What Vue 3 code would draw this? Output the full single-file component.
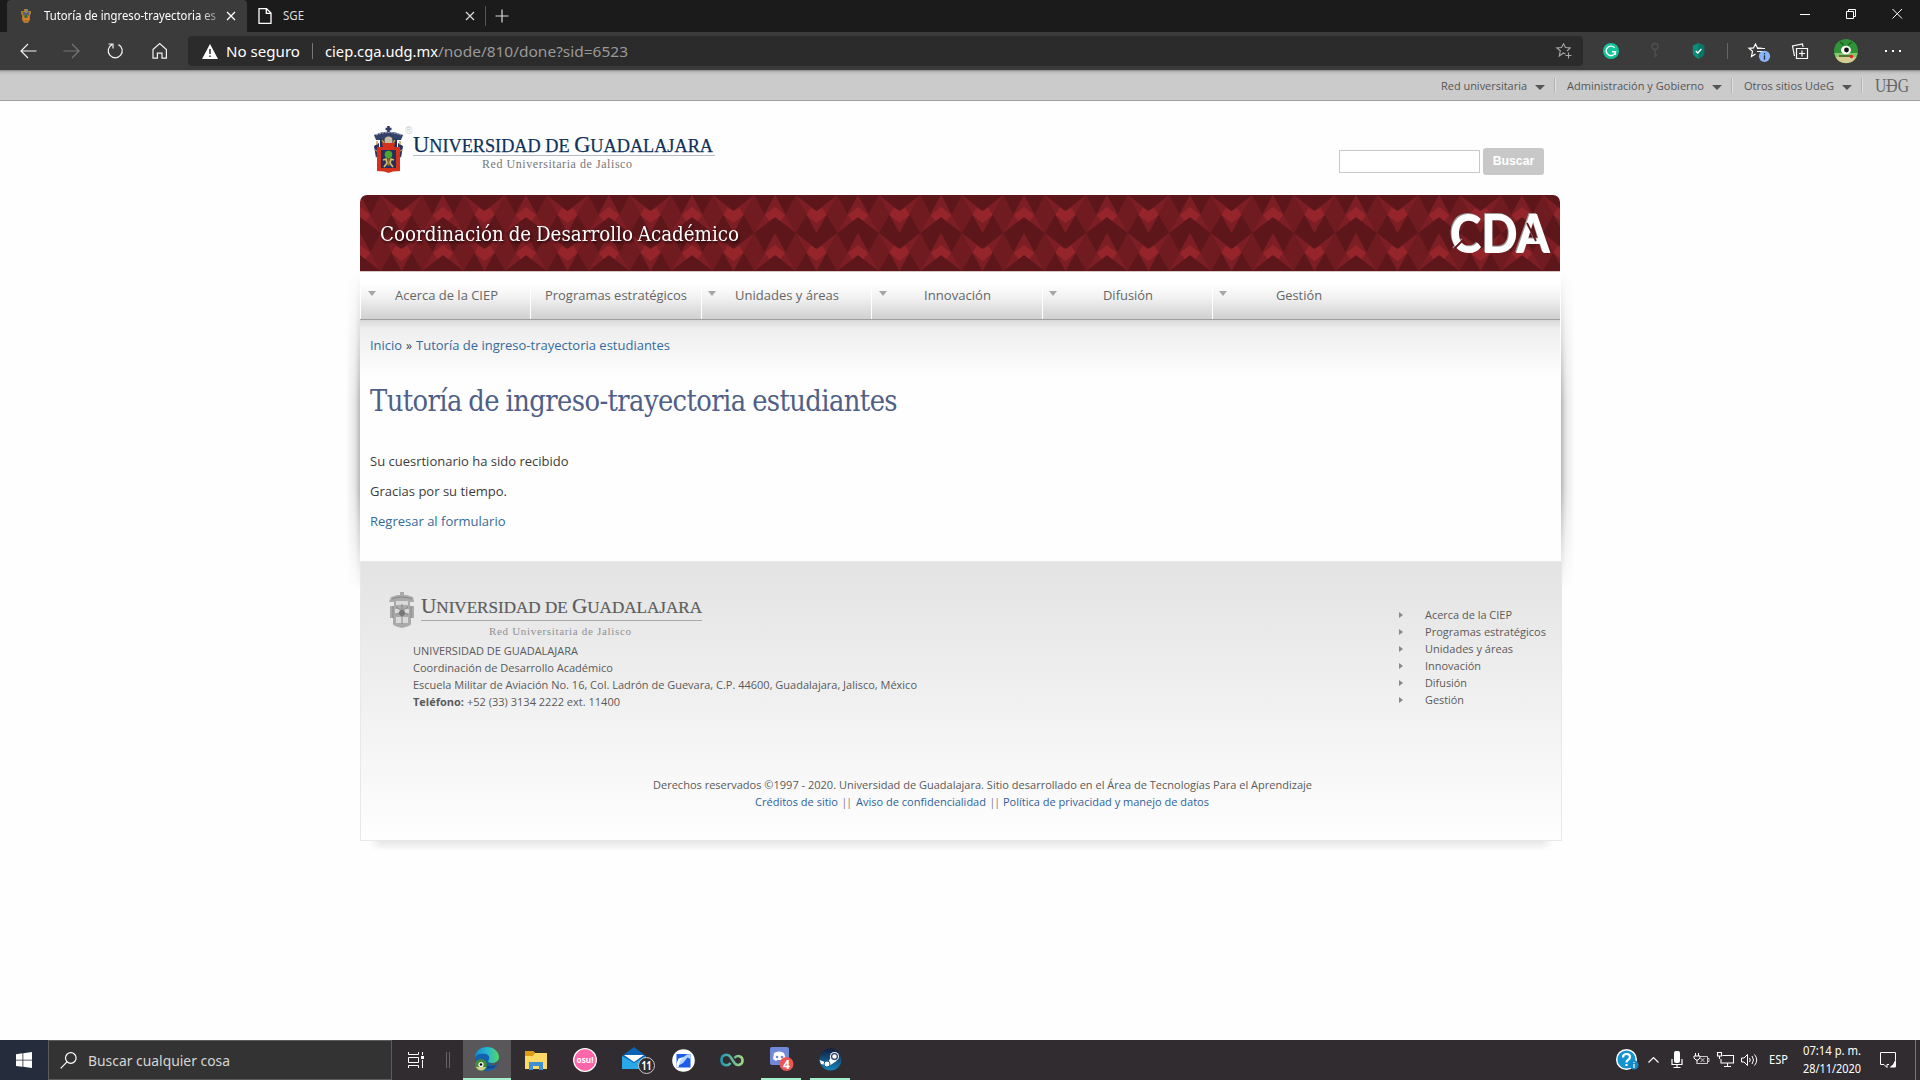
<script setup>
import { h } from 'vue'

// Single line of text fitted to a given width
const FitText = (props) =>
  h('svg', { width: props.w, height: props.lh, style: 'display:block;flex:none;overflow:visible' }, [
    h('text', {
      x: 0,
      y: props.base,
      'font-size': props.size,
      fill: 'currentColor',
      textLength: props.w,
      lengthAdjust: 'spacingAndGlyphs',
    }, props.text),
  ])
FitText.props = ['text', 'w', 'size', 'lh', 'base']

const siteMenus = [
  { label: 'Red universitaria', w: 86 },
  { label: 'Administración y Gobierno', w: 137 },
  { label: 'Otros sitios UdeG', w: 90 },
]
const nav = [
  { label: 'Acerca de la CIEP', w: 103, sub: true },
  { label: 'Programas estratégicos', w: 142, sub: false },
  { label: 'Unidades y áreas', w: 104, sub: true },
  { label: 'Innovación', w: 67, sub: true },
  { label: 'Difusión', w: 50, sub: true },
  { label: 'Gestión', w: 46, sub: true },
]
const address = [
  ['UNIVERSIDAD DE GUADALAJARA', 165],
  ['Coordinación de Desarrollo Académico', 200],
  ['Escuela Militar de Aviación No. 16, Col. Ladrón de Guevara, C.P. 44600, Guadalajara, Jalisco, México', 504],
]
const footNav = [
  ['Acerca de la CIEP', 87],
  ['Programas estratégicos', 121],
  ['Unidades y áreas', 88],
  ['Innovación', 56],
  ['Difusión', 42],
  ['Gestión', 39],
]
</script>

<template>
  <div class="screen">
    <div class="tabs">
      <div class="tab active">
        <svg class="fav" width="12" height="16" viewBox="0 0 12 16">
          <path d="M4 1h4v2h3v3l-1 1v5l-2 3H4l-2-3V7L1 6V3h3z" fill="#a9792d" />
          <path d="M3 4h6v3H3z" fill="#59617a" /><path d="M3 8h6v4H3z" fill="#e07b20" />
          <circle cx="6" cy="8.500" r="1.700" fill="#2c6b45" /><path d="M5 1h2v4H5z" fill="#8d8a70" />
        </svg>
        <div class="tabname"><FitText text="Tutoría de ingreso-trayectoria es" :w="172" :size="12" :lh="32" :base="20" /></div>
        <svg class="tabx" width="10" height="10" viewBox="0 0 10 10"><path d="M1 1l8 8M9 1l-8 8" stroke="#fff" stroke-width="1.300" /></svg>
      </div>
      <div class="tab second">
        <svg width="14" height="16" viewBox="0 0 14 16"><path d="M1 .7h7.500L13 5v10.300H1zM8.300.7V5.300H13" fill="none" stroke="#fff" stroke-width="1.300" /></svg>
        <div class="sge"><FitText text="SGE" :w="21" :size="12" :lh="32" :base="20" /></div>
        <svg width="10" height="10" viewBox="0 0 10 10"><path d="M1 1l8 8M9 1l-8 8" stroke="#ddd" stroke-width="1.200" /></svg>
      </div>
      <i class="tabsep"></i>
      <svg class="plus" width="14" height="14" viewBox="0 0 14 14"><path d="M7 .5v13M.5 7h13" stroke="#ddd" stroke-width="1.200" /></svg>
      <svg class="win" width="104" height="12" viewBox="0 0 104 12" fill="none" stroke="#fff">
        <path d="M0 6.500h10" /><path d="M46.500 3.500h7v7h-7zM48.500 3.500v-2h7v7h-2M92.500 1l9.500 9.500M102 1l-9.500 9.500" />
      </svg>
    </div>

    <div class="tools">
      <svg class="navicons" width="148" height="18" viewBox="0 0 148 18" fill="none" stroke="#f2f2f2" stroke-width="1.200">
        <path d="M8 2L1 9l7 7M1 9h15.500" />
        <path d="M52 2l7 7-7 7M59 9H43.500" stroke="#777" />
        <path d="M98.500 2.600a7 7 0 1 1-6.500 0M93 6.500V2h-4.500" />
        <path d="M133 7.500l6.700-6 6.700 6v8.700h-4.400v-5h-4.600v5H133z" />
      </svg>
      <div class="addr">
        <svg class="warn" width="16" height="15" viewBox="0 0 16 15"><path d="M8 0l8 15H0z" fill="#fff" /><path d="M8 5v5M8 11.500v1.500" stroke="#2b2b2b" stroke-width="1.500" /></svg>
        <FitText text="No seguro" :w="74" :size="15" :lh="30" :base="21" />
        <i class="addrsep"></i>
        <div class="host"><FitText text="ciep.cga.udg.mx" :w="113" :size="15" :lh="30" :base="21" /></div>
        <div class="path"><FitText text="/node/810/done?sid=6523" :w="190" :size="15" :lh="30" :base="21" /></div>
        <svg class="fstar" width="16" height="16" viewBox="0 0 16 16" fill="none" stroke="#aaa" stroke-width="1.100">
          <path d="M9.500 11L7.500 10 3.300 13l1-5.200L.8 4.900l4.700-.4L7.500.8l2 3.700 4.700.4L11 8M12.500 9.500v6M9.500 12.500h6" />
        </svg>
      </div>
      <svg class="ext" width="316" height="26" viewBox="0 0 316 26">
        <circle cx="18" cy="13" r="8" fill="#15c39a" />
        <path d="M21.500 9.800a4.700 4.700 0 1 0 1 4h-3.500M22.300 14v3" fill="none" stroke="#fff" stroke-width="1.400" />
        <g stroke="#505050" fill="none" stroke-width="1.300"><circle cx="62" cy="8.500" r="3" /><path d="M62 11.500v8M62 17h2" /></g>
        <path d="M105.500 5l5.700 2.500v8c-1 2.500-3 4-5.700 5.500-2.700-1.500-4.700-3-5.700-5.500v-8z" fill="#0b8d78" />
        <path d="M105.500 5l5.700 2.500v8c-1 2.500-3 4-5.700 5.500z" fill="#087666" />
        <path d="M102.800 13l2 2 3.600-4" fill="none" stroke="#fff" stroke-width="1.300" />
        <path d="M134.500 5v16" stroke="#666" />
        <g fill="none" stroke="#fff" stroke-width="1.200">
          <path d="M168 10.300l-4.500-.4L161.500 6l-2 3.900-4.500.4 3.500 3-1 5.200 4-2.500M163 13.500h6M163 10.500h8" transform="translate(1 0)" />
          <path d="M205.500 10.500h9v10h-11v-10zM209 12.500v6M206 15.500h6M201.500 18l-2-10 10-2 .5 3" />
        </g>
        <circle cx="171.500" cy="18.300" r="5.600" fill="#8ab4f8" /><path d="M171.500 15v1.300M171.500 17.300v4.500" stroke="#25324a" stroke-width="1.300" />
        <circle cx="253" cy="13" r="12" fill="#2f9438" />
        <path d="M241.200 15a12 12 0 0 0 23.600 0z" fill="#8cc46a" /><path d="M242.500 19a12 12 0 0 0 21 0z" fill="#d5cc91" />
        <path d="M247 4l4 3M259 4l-4 3" stroke="#185c22" stroke-width="1.200" />
        <ellipse cx="253" cy="12" rx="5" ry="4.300" fill="#fff" /><circle cx="253.500" cy="12" r="2.400" fill="#111" />
        <path d="M246 18h12" stroke="#374423" stroke-width="1.300" /><circle cx="258.500" cy="18.500" r="1.800" fill="#d42b24" />
        <path d="M292 12h2v2h-2zM299 12h2v2h-2zM306 12h2v2h-2z" fill="#fff" />
      </svg>
    </div>

    <div class="page">
      <div class="udgbar">
        <div v-for="m in siteMenus" :key="m.label" class="sm">
          <FitText :text="m.label" :w="m.w" :size="11.300" :lh="30" :base="20" />
          <i class="down"></i><i class="vsep"></i>
        </div>
        <div class="udg"><FitText text="UDG" :w="34" :size="19" :lh="30" :base="22" /><i class="udgline"></i></div>
      </div>

      <div class="head">
        <svg class="shield" width="44" height="52" viewBox="0 0 44 52">
          <path d="M13.500 4h6M16.500 1v10" stroke="#313d68" stroke-width="2.600" />
          <path d="M2 10q14-7 29 0l-2 5H4z" fill="#344168" /><path d="M4 10q12-5 25 0" stroke="#b7bccb" fill="none" stroke-dasharray="2 1" />
          <path d="M8 14h17v8H8z" fill="#252f5b" /><circle cx="16.500" cy="15.500" r="4" fill="#c7bf9d" /><path d="M10 15l4 6M23 15l-4 6" stroke="#bd9d42" stroke-width="1.500" />
          <path d="M2 21l5-3v10l-3 5zM31 21l-5-3v10l3 5z" fill="#29335e" /><path d="M3 25l4 2M30 25l-4 2M5 16v4M28 16v4" stroke="#b99748" stroke-width="1.300" />
          <path d="M5 22h6l-1-4h13l-1 4h6v24q-8 0-11.500 2Q13 46 5 46z" fill="#d4321d" /><path d="M9 25h15v18H9z" fill="#252f5b" />
          <path d="M16.500 27v14" stroke="#8b6b30" stroke-width="2" /><circle cx="16.500" cy="29.500" r="3.800" fill="#4ba52f" />
          <path d="M11 35l3-1 1 4-3 4M22 35l-3-1-1 4 3 4" stroke="#d4b86c" fill="none" stroke-width="1.700" />
          <text x="33" y="9" font-size="10" fill="#ccc" font-family="Liberation Sans">®</text>
        </svg>
        <svg class="uname" width="304" height="52" viewBox="0 0 304 52">
          <text x="0" y="27" font-size="24" fill="#0d3159" stroke="#0d3159" stroke-width=".25" textLength="300" lengthAdjust="spacingAndGlyphs">U<tspan font-size="19.500">NIVERSIDAD DE </tspan>G<tspan font-size="19.500">UADALAJARA</tspan></text>
          <path d="M0 30.500h302" stroke="#b5bcc4" />
          <text x="69" y="42.500" font-size="12" fill="#777" textLength="150">Red Universitaria de Jalisco</text>
        </svg>
        <div class="search"><input type="text" /><button>Buscar</button></div>
      </div>

      <div class="site">
        <div class="banner">
          <svg class="pat" width="1200" height="76">
            <defs>
              <pattern id="facets" width="83" height="38" patternUnits="userSpaceOnUse">
                <rect width="83" height="38" fill="#5d161a" />
                <path d="M0 0l20.750 38L0 22zM83 0L62.250 38 83 22zM41.500 38L20.750 0 41.500 16 62.250 0z" fill="#7d1e25" />
                <path d="M10.250 20L20.750 0l10.500 20-10.500 18zM51.750 20l10.500-20 10.500 20-10.500 18z" fill="#701b20" />
                <path d="M0 12l10 8-4.500 6L0 22zM83 12l-10 8 4.500 6 5.500-4zM41.500 16l6-3 4 7-10 8-10-8 4-7z" fill="#96252b" />
              </pattern>
            </defs>
            <rect width="1200" height="76" fill="url(#facets)" />
          </svg>
          <div class="sitename"><FitText text="Coordinación de Desarrollo Académico" :w="359" :size="19.500" :lh="76" :base="46" /></div>
          <svg class="cda" width="102" height="46" viewBox="0 0 102 46">
            <text x="1" y="43" font-size="54" textLength="100" lengthAdjust="spacingAndGlyphs">CDA</text>
            <path d="M5 39l9-9M78 13l9 18" stroke="#641a1e" stroke-width="1.800" />
          </svg>
        </div>
        <div class="nav">
          <div v-for="n in nav" :key="n.label" class="ni" :class="{ sub: n.sub }">
            <i v-if="n.sub" class="navdown"></i>
            <FitText :text="n.label" :w="n.w" :size="13" :lh="47" :base="28" />
          </div>
        </div>
        <div class="content">
          <div class="crumb">
            <a><FitText text="Inicio" :w="32" :size="13" :lh="20" :base="15" /></a>
            <FitText text="»" :w="6" :size="13" :lh="20" :base="15" />
            <a><FitText text="Tutoría de ingreso-trayectoria estudiantes" :w="254" :size="13" :lh="20" :base="15" /></a>
          </div>
          <h1><FitText text="Tutoría de ingreso-trayectoria estudiantes" :w="527" :size="29" :lh="40" :base="30.500" /></h1>
          <p><FitText text="Su cuesrtionario ha sido recibido" :w="198.500" :size="13" :lh="20" :base="15" /></p>
          <p><FitText text="Gracias por su tiempo." :w="137" :size="13" :lh="20" :base="15" /></p>
          <p><a><FitText text="Regresar al formulario" :w="135.500" :size="13" :lh="20" :base="15" /></a></p>
        </div>
      </div>

      <div class="footer">
        <div class="fcols">
          <div class="fleft">
            <svg class="flogo" width="316" height="48" viewBox="0 0 316 48">
              <g fill="#aaa">
                <path d="M12 0h4v4h-4zM3 5q11-5 22 0l1 5h-4v4h4v12h-3v6q0 2-9 4-9-2-9-4v-6H2V14h4v-4H1z" />
                <path d="M8 9h12v4H8zM7 17h5v4H7zM16 17h5v4h-5zM8 25h12v6H8z" fill="#d9d9d9" />
                <path d="M4 7q10-4 20 0M5 14v12M23 14v12M14 12v20M8 15l12 8M20 15l-12 8" stroke="#888" fill="none" />
                <circle cx="14" cy="21" r="3" fill="#777" />
              </g>
              <text x="33" y="20.500" font-size="20.500" fill="#5c5c5c" stroke="#5c5c5c" stroke-width=".2" textLength="281" lengthAdjust="spacingAndGlyphs">U<tspan font-size="16.500">NIVERSIDAD DE </tspan>G<tspan font-size="16.500">UADALAJARA</tspan></text>
              <path d="M33 28.500h281" stroke="#aaa" />
              <text x="101" y="43" font-size="11" fill="#909090" textLength="142">Red Universitaria de Jalisco</text>
            </svg>
            <div class="addrlines">
              <FitText v-for="a in address" :key="a[0]" :text="a[0]" :w="a[1]" :size="11" :lh="17" :base="12.500" />
              <div class="tel"><b><FitText text="Teléfono:" :w="51" :size="11" :lh="17" :base="12.500" /></b><FitText text="+52 (33) 3134 2222 ext. 11400" :w="153" :size="11" :lh="17" :base="12.500" /></div>
            </div>
          </div>
          <ul class="fnav">
            <li v-for="f in footNav" :key="f[0]"><i></i><FitText :text="f[0]" :w="f[1]" :size="11" :lh="17" :base="12.500" /></li>
          </ul>
        </div>
        <div class="legal">
          <FitText text="Derechos reservados ©1997 - 2020. Universidad de Guadalajara. Sitio desarrollado en el Área de Tecnologías Para el Aprendizaje" :w="659" :size="11" :lh="17" :base="12.500" />
          <div class="links">
            <a><FitText text="Créditos de sitio" :w="83" :size="11" :lh="17" :base="12.500" /></a><FitText text="||" :w="9.500" :size="11" :lh="17" :base="12.500" />
            <a><FitText text="Aviso de confidencialidad" :w="130" :size="11" :lh="17" :base="12.500" /></a><FitText text="||" :w="9.500" :size="11" :lh="17" :base="12.500" />
            <a><FitText text="Política de privacidad y manejo de datos" :w="206" :size="11" :lh="17" :base="12.500" /></a>
          </div>
        </div>
      </div>
      <div class="footshadow"></div>
    </div>

    <div class="taskbar">
      <div class="start"><svg width="16" height="16" viewBox="0 0 16 16"><path d="M0 2.300L6.500 1.300v6.400H0zM7.300 1.200L16 0v7.700H7.300zM0 8.500h6.500v6.300L0 13.900zM7.300 8.500H16V16l-8.700-1.200z" fill="#fff" /></svg></div>
      <div class="tsearch">
        <svg width="17" height="17" viewBox="0 0 17 17" fill="none" stroke="#fff" stroke-width="1.200"><circle cx="10.800" cy="6" r="5.300" /><path d="M7 9.800L.7 16.300" /></svg>
        <FitText text="Buscar cualquier cosa" :w="142" :size="14.500" :lh="38" :base="25" />
      </div>
      <svg class="tview" width="44" height="18" viewBox="0 0 44 18" fill="none" stroke="#fff"><path d="M.5 1v2.500h10V1M.5 17v-2.500h10V17M.5 6.500h10v5H.5zM14.500 1v3M14.500 9v8" /><path d="M13 5h3v3h-3z" fill="#fff" stroke="none" /><path d="M38.500 1v16M41.500 1v16" stroke="#666" /></svg>
      <div class="app sel"><svg width="26" height="26" viewBox="0 0 26 26">
        <defs><linearGradient id="eg" x1="0" x2="1"><stop offset="0" stop-color="#148bd2" /><stop offset=".55" stop-color="#29b9cf" /><stop offset="1" stop-color="#55d85b" /></linearGradient></defs>
        <circle cx="13" cy="13" r="12" fill="#1262ad" />
        <path d="M1 12C1 5 6 1 13 1s12 5 12 10c0 4-3 6-7 6-3 0-4-1-4-2 2-2 2-6-2-7C7 7 2 8 1 12z" fill="url(#eg)" />
        <path d="M10 14c0 5 5 8 12 5l-1 2c-6 4-13 0-11-7z" fill="#0d478b" /><path d="M14 15c0 3 6 4 11-1v3l-3 2c-4 1-8-1-8-4z" fill="#565357" />
        <circle cx="7" cy="19" r="6" fill="#438d36" /><path d="M1.500 21h11q-5 7-11 0z" fill="#d4cb8d" /><circle cx="7" cy="18.500" r="2.600" fill="#fff" /><circle cx="7" cy="18.500" r="1.300" />
      </svg></div>
      <div class="app a2"><svg width="22" height="19" viewBox="0 0 22 19"><path d="M0 0h8l2 2h12v16H0z" fill="#ffd968" /><path d="M0 0h8l2 2-2 3H0z" fill="#dd9c13" /><path d="M4 19v-8h14v8h-4v-4H8v4z" fill="#3d91d2" /></svg></div>
      <div class="app a3"><svg width="24" height="24" viewBox="0 0 24 24"><circle cx="12" cy="12" r="11.300" fill="#ff66aa" stroke="#fff" stroke-width="1.300" /><text x="3.500" y="14.500" font-size="8" font-weight="700" fill="#fff" textLength="17" lengthAdjust="spacingAndGlyphs">osu!</text></svg></div>
      <div class="app a4"><svg width="34" height="28" viewBox="0 0 34 28"><path d="M0 9L12 0l12 9v13H0z" fill="#0b63b5" /><path d="M2 8h20l-10 7z" fill="#fff" /><path d="M0 9l12 7 12-7v13H0z" fill="#29a9e8" /><circle cx="24.500" cy="18.500" r="8" fill="#302c2f" stroke="#ccc" /><text x="19.500" y="22.800" font-size="12.500" font-weight="700" fill="#fff" textLength="10" lengthAdjust="spacingAndGlyphs">11</text></svg></div>
      <div class="app a5"><svg width="23" height="23" viewBox="0 0 23 23"><circle cx="11.500" cy="11.500" r="11.300" fill="#fff" /><path d="M4.500 5h14v13.500h-14z" fill="#1b5de8" /><path d="M15 5.500L18.500 5v5l-3-1.500L11 14l-5.500 3 2-6z" fill="#b5d6ff" /><path d="M4.500 14.500l2-5 5-1.500-3.500 4-1.500 6.500h-2z" fill="#fff" /></svg></div>
      <div class="app a6"><svg width="26" height="16" viewBox="0 0 26 16"><defs><linearGradient id="inf"><stop stop-color="#249ab5" /><stop offset="1" stop-color="#a0d77c" /></linearGradient></defs><path d="M11.500 11C9 14.500 2.500 14 2.500 8s6.500-6.500 9-3l4 6c2.500 3.500 8 2 8-2.500s-5.500-6-8-2.500" fill="none" stroke="url(#inf)" stroke-width="2.600" /></svg></div>
      <div class="app a7 run"><svg width="25" height="26" viewBox="0 0 25 26"><path d="M1 3q0-2 2-2h15q2 0 2 2v19l-4-3H3q-2 0-2-2z" fill="#7289da" /><path d="M5 7q5-3 10 0l2 6-3 2-1-1H8l-1 1-3-2z" fill="#fff" /><circle cx="8" cy="11" r="1.300" fill="#7289da" /><circle cx="13" cy="11" r="1.300" fill="#7289da" /><circle cx="17.500" cy="18" r="7" fill="#ed5555" /><text x="14" y="22.500" font-size="12" font-weight="700" fill="#fff">4</text></svg></div>
      <div class="app a8 run"><svg width="23" height="23" viewBox="0 0 23 23"><defs><linearGradient id="st" x2="0" y2="1"><stop stop-color="#111d3e" /><stop offset="1" stop-color="#1485bd" /></linearGradient></defs><circle cx="11.500" cy="11.500" r="11" fill="url(#st)" /><path d="M.5 12l8 3 4-6.500 5 4.500-7.500 5-8-2z" fill="#fff" /><circle cx="15.500" cy="8.500" r="4.500" fill="#fff" /><circle cx="15.500" cy="8.500" r="2.900" fill="#fff" stroke="#26345a" stroke-width="1.200" /><circle cx="8" cy="16" r="3" fill="#fff" stroke="#175d8f" /></svg></div>
      <svg class="tray" width="146" height="26" viewBox="0 0 146 26" fill="none" stroke="#fff" stroke-width="1.200">
        <circle cx="10.500" cy="12.500" r="9.800" fill="#1593cf" stroke-width="1.500" /><path d="M7 10.500q0-3.500 3.500-3.500T14 10q0 1.500-2 2.800-1.500 1-1.500 2.700M10.500 17v2" stroke-width="2.200" /><circle cx="18" cy="18" r="4.500" fill="#1588c4" stroke="none" /><path d="M18 15v1M18 17v4" />
        <path d="M32.500 15.500l5-5 5 5" /><rect x="58" y="4" width="6" height="12" rx="2" fill="#fff" stroke="none" /><path d="M56 12v5.500h10V12M61 17.500v3M57.500 20.500h7" />
        <path d="M79.500 6v3M82.500 6v3M78 9h6v2l-2 2h-2l-2-2zM81 13v4" stroke-width="1" /><path d="M83 9.500h8.500v7H81M91.500 11.500h1.500v3h-1.500M84.500 11l4 4M88.500 11l-4 4" stroke-width="1" stroke="#ccc" />
        <path d="M106.500 8.500h11v7.500H105v-4M108 19.500h7M111.500 16v3.500M101.500 5.500h4v3.500h-4zM103.500 9v3" stroke-width="1.100" />
        <path d="M125.500 11h2.500l3.500-3.500v11L128 15h-2.500zM133.500 11q1.500 2 0 4M136 9q3 4 0 8M138.500 7.500q4.500 5.500 0 11" stroke-width="1" />
      </svg>
      <div class="esp"><FitText text="ESP" :w="19" :size="12" :lh="40" :base="24" /></div>
      <div class="clock"><FitText text="07:14 p. m." :w="58" :size="12" :lh="18" :base="13" /><FitText text="28/11/2020" :w="58" :size="12" :lh="18" :base="13" /></div>
      <svg class="note" width="18" height="18" viewBox="0 0 18 18" fill="none" stroke="#fff"><path d="M16.500 9V1.500H1.500v12H5l3 3v-3h2" /><path d="M16.500 9.500v6.500H11.500q3-1 5-6.500z" fill="#fff" /></svg>
      <i class="showdesk"></i>
    </div>
  </div>
</template>

<style>
html, body { margin: 0; overflow: hidden; background: #fff; }
</style>

<style scoped>
.screen { width: 1920px; height: 1080px; display: flex; flex-direction: column; background: #fefefe; font-family: "Open Sans", sans-serif; overflow: hidden; }
svg { display: block; flex: none; overflow: visible; }
i { display: block; flex: none; }
.tabs { height: 32px; flex: none; background: #1b1b1b; display: flex; align-items: center; font-family: "Noto Sans", sans-serif; }
.tab { height: 32px; display: flex; align-items: center; flex: none; }
.tab.active { margin-left: 7px; width: 240px; background: #3b3b3b; border-radius: 4px 4px 0 0; color: #fff; }
.fav { margin-left: 13px; }
.tabname { width: 173px; margin-left: 12px; -webkit-mask-image: linear-gradient(90deg, #000 155px, rgba(0,0,0,.35) 173px); mask-image: linear-gradient(90deg, #000 155px, rgba(0,0,0,.35) 173px); }
.tabx { margin-left: 8.500px; }
.second { margin-left: 10.500px; color: #ddd; }
.sge { width: 182px; margin-left: 11px; }
.tabsep { width: 1px; height: 20px; background: #555; margin-left: 10px; }
.plus { margin-left: 9px; }
.win { margin-left: auto; margin-right: 16px; margin-top: -4px; }
.tools { height: 38px; flex: none; background: #3b3b3b; display: flex; align-items: center; font-family: "Noto Sans", sans-serif; }
.navicons { margin-left: 20px; }
.addr { margin-left: 20px; width: 1395px; height: 30px; background: #2b2b2b; border-radius: 4px; display: flex; align-items: center; color: #fff; flex: none; }
.warn { margin: 0 8px 0 14px; }
.addrsep { width: 1px; height: 16px; background: #777; margin: 0 12px; }
.path { color: #999; }
.fstar { margin-left: auto; margin-right: 11.500px; }
.ext { margin-left: 10px; }
.page { height: 970px; flex: none; display: flex; flex-direction: column; }
.udgbar { height: 31px; box-sizing: border-box; flex: none; border-bottom: 1px solid #a0a0a0; background: linear-gradient(#898989, #bcbcbc 2px, #cbcbcb 5px); color: #555; display: flex; padding-left: 1440.500px; }
.sm { display: flex; align-items: center; }
.down { width: 0; border: 5px solid transparent; border-top-color: #555; border-bottom: 0; margin-left: 8.500px; margin-top: 4px; }
.vsep { width: 1px; height: 15px; background: #b3b3b3; border-right: 1px solid #e0e0e0; margin: 0 11px 0 8.500px; }
.udg { margin-left: 1px; font-family: "Liberation Serif", serif; color: #666; position: relative; }
.udgline { position: absolute; left: 11px; top: 15px; width: 10px; height: 1px; background: #666; }
.head { height: 94px; flex: none; display: flex; margin: 0 360px; align-items: flex-start; font-family: "Liberation Serif", serif; }
.shield { margin: 24px 0 0 12px; }
.uname { margin: 24px 0 0 -3px; }
.search { display: flex; margin: 47px 16px 0 auto; gap: 3px; align-items: center; }
.search input { width: 141px; height: 23px; box-sizing: border-box; border: 1px solid #c8c8c8; background: #fff; padding: 0; }
.search button { width: 61px; height: 27px; border: 0; border-radius: 3px; background: #c8c8c8; color: #fff; font: bold 12.300px "Liberation Sans", sans-serif; padding: 0 0 2px; }
.site { width: 1201px; height: 366px; margin-left: 360px; flex: none; position: relative; }
.site::before, .site::after { content: ""; position: absolute; top: 76px; bottom: -30px; width: 15px; z-index: 0; -webkit-mask-image: linear-gradient(transparent, #000 130px, #000 220px, transparent); mask-image: linear-gradient(transparent, #000 130px, #000 220px, transparent); }
.site::before { left: -15px; background: linear-gradient(270deg, #b8b8b8, #e6e6e6 5px, transparent 14px); }
.site::after { left: 1201px; background: linear-gradient(90deg, #b8b8b8, #e6e6e6 5px, transparent 14px); }
.banner { width: 1200px; height: 76px; border-radius: 7px 7px 0 0; overflow: hidden; position: relative; display: flex; align-items: center; }
.pat { position: absolute; inset: 0; }
.sitename { position: relative; margin-left: 20px; color: #fff; font-family: "DejaVu Serif Condensed", "DejaVu Serif", serif; font-stretch: condensed; word-spacing: -1px; filter: drop-shadow(1px 2px 1px rgba(0,0,0,.6)); }
.cda { position: relative; margin: 0 9px 0 auto; fill: #fff; font-family: Lato, sans-serif; font-weight: 900; filter: drop-shadow(-1px -1px 0 #999); }
.nav { width: 1200px; height: 48px; box-sizing: border-box; border-top: 1px solid #d8c8c8; display: flex; background: linear-gradient(#fff 12px, #f0f0f0 27px, #cfcfcf 47px); color: #666; }
.ni { width: 170.400px; box-sizing: border-box; border-left: 1px solid #fff; height: 47px; display: flex; justify-content: center; position: relative; flex: none; }
.ni.sub { padding-left: 2px; }
.navdown { position: absolute; left: 6.500px; top: 19px; width: 0; border: 4.500px solid transparent; border-top: 5px solid #a6a6a6; border-bottom: 0; }
.content { width: 1200px; height: 242px; box-sizing: border-box; border-top: 1px solid #a0a0a0; background: linear-gradient(#d8d8d8, #eee 9px, #f3f3f3 25px, #fefefe 58px); padding: 15px 10px 0; color: #3c3c3c; }
.content a { color: #356b9c; }
.crumb { display: flex; gap: 4px; }
h1 { margin: 25px 0 31px; color: #4f5f88; font-family: "DejaVu Serif Condensed", "DejaVu Serif", serif; font-stretch: condensed; font-weight: 400; word-spacing: -1px; letter-spacing: -.6px; }
p { margin: 0 0 10px; }
.footer { width: 1202px; height: 280px; box-sizing: border-box; border: 1px solid #e8e8e8; margin-left: 360px; flex: none; background: linear-gradient(#e3e3e3, #fefefe); color: #5a5a5a; position: relative; }
.footer a { color: #2f629b; }
.fcols { display: flex; justify-content: space-between; height: 214px; }
.flogo { margin: 30px 0 0 27px; font-family: "Liberation Serif", serif; }
.addrlines { margin: 2px 0 0 52px; }
.tel { display: flex; gap: 3px; }
.fnav { list-style: none; margin: 44px 14px 0 0; padding: 0; width: 148px; }
.fnav li { display: flex; align-items: center; height: 17px; }
.fnav i { border: 3.500px solid transparent; border-left: 4px solid #888; border-right: 0; margin-right: 22px; }
.legal { display: flex; flex-direction: column; align-items: center; padding-left: 42px; }
.links { display: flex; gap: 4px; }
.footshadow { height: 10px; width: 1184px; margin-left: 369px; background: linear-gradient(#e6e6e6, transparent); flex: none; -webkit-mask-image: linear-gradient(90deg, transparent, #000 12px, #000 1172px, transparent); mask-image: linear-gradient(90deg, transparent, #000 12px, #000 1172px, transparent); }
.taskbar { height: 40px; flex: none; display: flex; align-items: center; background: #302c2f; color: #fff; font-family: "Noto Sans", sans-serif; }
.start { width: 48px; height: 40px; background: #252c3b; display: flex; align-items: center; justify-content: center; flex: none; }
.tsearch { width: 344px; height: 40px; box-sizing: border-box; border: 1px solid #5c5c5c; background: #333; display: flex; align-items: center; gap: 11px; padding-left: 11px; color: #d6d6d6; flex: none; }
.tview { margin: 0 11px 0 16px; }
.app { width: 40px; height: 40px; box-sizing: border-box; display: flex; align-items: center; justify-content: center; flex: none; margin-left: 9px; }
.sel { width: 48px; margin-left: 0; background: #5a575a; border-bottom: 2px solid #a5f0cb; }
.a2 { margin-left: 5px; }
.a4 { padding-left: 9px; }
.a4 svg { margin-top: 2px; }
.run { border-bottom: 2px solid #a5f0cb; }
.tray { margin-left: auto; }
.esp { margin-left: 7px; }
.clock { margin-left: 15px; padding-bottom: 1px; }
.note { margin-left: 18px; margin-right: 18px; }
.showdesk { width: 1px; height: 40px; background: #777; margin-right: 4px; }
</style>
